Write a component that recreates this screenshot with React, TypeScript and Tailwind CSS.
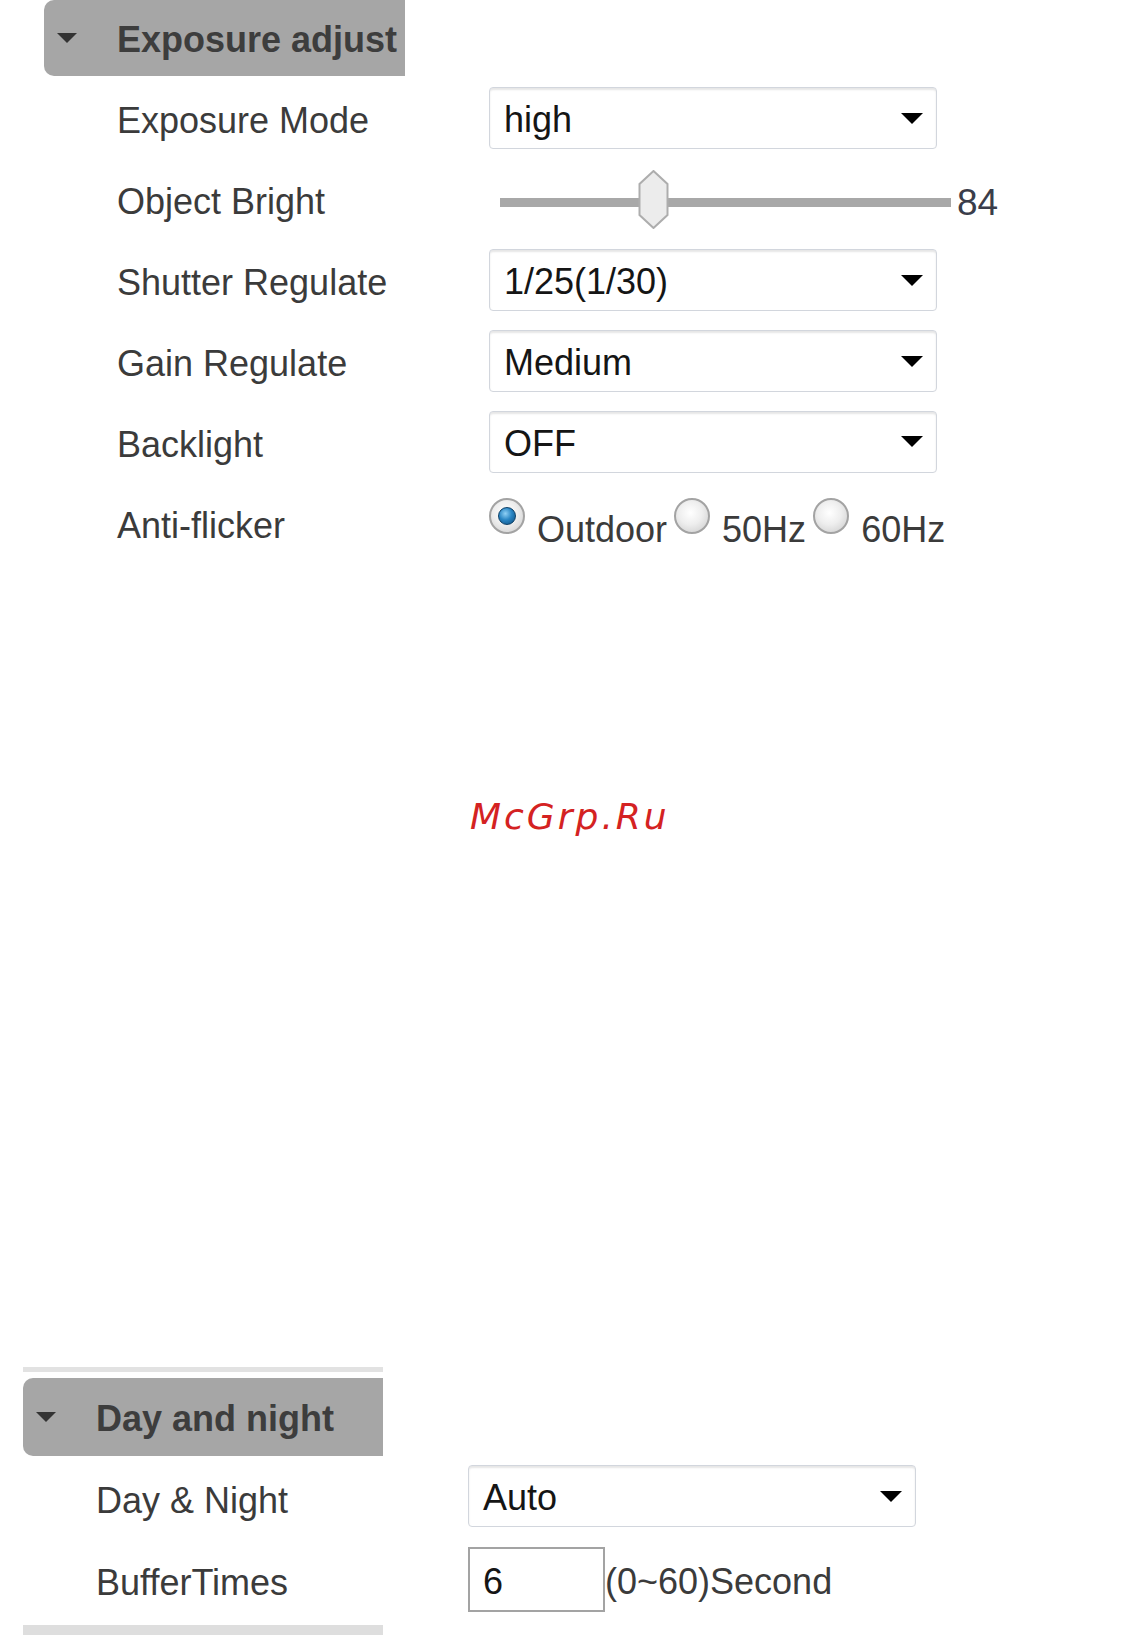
import React from 'react';

const labelCls = "text-[36px] leading-none text-[#3b3b3b]";

function Caret({ className }: { className?: string }) {
  return (
    <svg className={className} viewBox="0 0 22 11" width="22" height="11">
      <polygon points="0,0 22,0 11,11" fill="currentColor" />
    </svg>
  );
}

function SectionHeader({ title, width }: { title: string; width: string }) {
  return (
    <div className={`flex items-center h-full bg-[#a6a6a6] rounded-l-[10px] ${width}`}>
      <Caret className="ml-[13px] w-[20px] h-[10px] text-[#333]" />
      <span className="ml-[40px] pt-[4px] text-[36px] font-bold leading-none text-[#3d3d3d]">{title}</span>
    </div>
  );
}

function Select({ value, className = "" }: { value: string; className?: string }) {
  return (
    <div
      className={`flex items-center justify-between w-[448px] h-[62px] pl-[14px] pr-[13px] bg-white border border-[#d2d6dd] rounded-[4px] shadow-[inset_0_2px_2px_rgba(0,0,0,0.10)] ${className}`}
    >
      <span className="text-[36px] leading-none text-[#151515] pt-[4px]">{value}</span>
      <Caret className="w-[22px] h-[11px] text-black" />
    </div>
  );
}

function Radio({ checked }: { checked?: boolean }) {
  return (
    <div className="w-[36px] h-[36px] rounded-full border-[2px] border-[#a3a3a3] bg-[radial-gradient(circle_at_45%_40%,#ffffff_0%,#eeeeee_45%,#c9c9c9_100%)] flex items-center justify-center shrink-0">
      {checked && (
        <div className="w-[18px] h-[18px] rounded-full border border-[#0c3f66] bg-[radial-gradient(circle_at_40%_35%,#8fd0f5_0%,#2a86c4_45%,#0b4a7c_100%)]" />
      )}
    </div>
  );
}

function Row({ label, children, h = "h-[81px]" }: { label: string; children: React.ReactNode; h?: string }) {
  return (
    <div className={`flex items-center ${h}`}>
      <div className="w-[445px] pl-[73px] shrink-0">
        <span className={labelCls}>{label}</span>
      </div>
      <div className="flex items-center">{children}</div>
    </div>
  );
}

function App() {
  return (
    <div className="w-[1126px] h-[1635px] bg-white overflow-hidden font-['Liberation_Sans',Arial,sans-serif]">
      {/* Exposure adjust */}
      <div className="pl-[44px]">
        <div className="h-[76px]">
          <SectionHeader title="Exposure adjust" width="w-[361px]" />
        </div>
        <div className="pt-[5px]">
          <Row label="Exposure Mode">
            <Select value="high" className="mb-[7px]" />
          </Row>
          <Row label="Object Bright">
            <div className="flex items-center ml-[11px]">
              <div className="relative w-[451px] h-[9px] bg-[#a8a8a8]">
                <svg
                  className="absolute left-[138px] top-[-28px]"
                  width="31"
                  height="59"
                  viewBox="0 0 31 59"
                >
                  <polygon
                    points="15.5,1 29.5,14 29.5,45 15.5,58 1.5,45 1.5,14"
                    fill="#ececec"
                    stroke="#adadad"
                    strokeWidth="2"
                  />
                </svg>
              </div>
              <span className="ml-[6px] text-[37px] leading-none text-[#3a3d4a]">84</span>
            </div>
          </Row>
          <Row label="Shutter Regulate">
            <Select value="1/25(1/30)" className="mb-[7px]" />
          </Row>
          <Row label="Gain Regulate">
            <Select value="Medium" className="mb-[7px]" />
          </Row>
          <Row label="Backlight">
            <Select value="OFF" className="mb-[8px]" />
          </Row>
          <Row label="Anti-flicker">
            <div className="flex items-center">
              <div className="mb-[22px]">
                <Radio checked />
              </div>
              <span className="ml-[12px] pt-[6px] text-[36px] leading-none text-[#3b3b3b]">Outdoor</span>
              <div className="ml-[7px] mb-[22px]">
                <Radio />
              </div>
              <span className="ml-[12px] pt-[6px] text-[36px] leading-none text-[#3b3b3b]">50Hz</span>
              <div className="ml-[7px] mb-[22px]">
                <Radio />
              </div>
              <span className="ml-[12px] pt-[6px] text-[36px] leading-none text-[#3b3b3b]">60Hz</span>
            </div>
          </Row>
        </div>
      </div>

      {/* blank area with watermark */}
      <div className="h-[800px] pt-[230px] pl-[470px]">
        <span className="font-['DejaVu_Sans',sans-serif] italic text-[36px] leading-[40px] tracking-[3px] text-[#d42222]">
          McGrp.Ru
        </span>
      </div>

      {/* Day and night */}
      <div className="pl-[23px]">
        <div className="w-[360px] h-[5px] bg-[#e2e2e2]" />
        <div className="h-[78px] mt-[6px]">
          <SectionHeader title="Day and night" width="w-[360px]" />
        </div>
        <div className="pt-[4px]">
          <Row label="Day & Night" h="h-[82px]">
            <Select value="Auto" className="mb-[10px]" />
          </Row>
          <Row label="BufferTimes" h="h-[82px]">
            <div className="flex items-center mb-[7px]">
              <div className="w-[137px] h-[65px] border-[2px] border-[#a3a3a3] flex items-center pl-[13px] bg-white">
                <span className="text-[36px] leading-none text-[#151515] pt-[4px]">6</span>
              </div>
              <span className="text-[36px] leading-none text-[#3b3b3b] pt-[4px]">(0~60)Second</span>
            </div>
          </Row>
        </div>
        <div className="w-[360px] h-[10px] mt-[1px] bg-[#dedede]" />
      </div>
    </div>
  );
}

export default App;
